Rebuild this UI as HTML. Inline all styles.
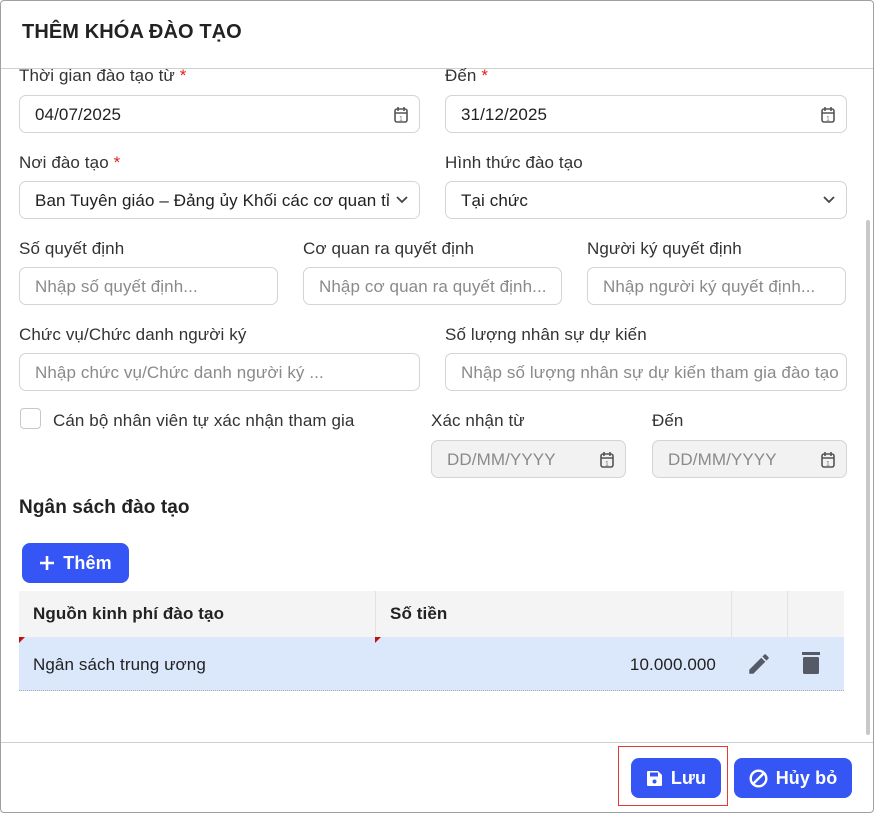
<!DOCTYPE html>
<html><head><meta charset="utf-8"><style>
*{box-sizing:border-box;margin:0;padding:0}
body{width:874px;height:813px;position:relative;background:#fff;font-family:"Liberation Sans",sans-serif;color:#212121;overflow:hidden;letter-spacing:0.1px}
.frame{position:absolute;left:0;top:0;width:874px;height:813px;border:1px solid #a0a0a0;border-radius:4px}
.a{position:absolute}
.lbl{position:absolute;font-size:17px;color:#333;line-height:20px}
.req{color:#e02020}
.in{position:absolute;height:38px;border:1px solid #d4d4d4;border-radius:7px;font-size:17px;line-height:38px;padding-left:15px;color:#212121;white-space:nowrap;overflow:hidden;background:#fff}
.ph{color:#8a8a8a}
.dis{background:#f2f2f2}
.ic{position:absolute;right:10px;top:10px}
.btn{position:absolute;background:#3555f5;color:#fff;border-radius:8px;font-size:18px;font-weight:bold;display:flex;align-items:center;justify-content:center;gap:8px}
</style></head><body>
<div class="frame"></div>
<div class="a" style="left:22px;top:21px;font-size:20px;font-weight:bold;color:#222">THÊM KHÓA ĐÀO TẠO</div>
<div class="a" style="left:1px;top:68px;width:872px;height:1px;background:#cfcfcf"></div>
<div class="a" style="left:866px;top:220px;width:4px;height:515px;background:#c8c8c8;border-radius:2px"></div>

<div class="lbl" style="left:19px;top:66px">Thời gian đào tạo từ <span class="req">*</span></div>
<div class="lbl" style="left:445px;top:66px">Đến <span class="req">*</span></div>
<div class="in" style="left:19px;top:95px;width:401px">04/07/2025<svg class="ic" width="16" height="18" viewBox="0 0 16 18"><rect x="2" y="3" width="12" height="13" rx="2" fill="none" stroke="#555" stroke-width="1.6"/><path d="M2 7h12M5 1v4M11 1v4" stroke="#555" stroke-width="1.6"/><text x="8" y="14.5" font-size="6" text-anchor="middle" fill="#555">1</text></svg></div>
<div class="in" style="left:445px;top:95px;width:402px">31/12/2025<svg class="ic" width="16" height="18" viewBox="0 0 16 18"><rect x="2" y="3" width="12" height="13" rx="2" fill="none" stroke="#555" stroke-width="1.6"/><path d="M2 7h12M5 1v4M11 1v4" stroke="#555" stroke-width="1.6"/><text x="8" y="14.5" font-size="6" text-anchor="middle" fill="#555">1</text></svg></div>

<div class="lbl" style="left:19px;top:153px">Nơi đào tạo <span class="req">*</span></div>
<div class="lbl" style="left:445px;top:153px">Hình thức đào tạo</div>
<div class="in" style="left:19px;top:181px;width:401px;padding-right:30px">Ban Tuyên giáo – Đảng ủy Khối các cơ quan tỉnh<span class="a" style="right:0;top:0;width:30px;height:36px;background:#fff"></span><svg class="ic" style="top:13px" width="14" height="10" viewBox="0 0 14 10"><path d="M2 2l5 5 5-5" fill="none" stroke="#444" stroke-width="1.8"/></svg></div>
<div class="in" style="left:445px;top:181px;width:402px">Tại chức<svg class="ic" style="top:13px" width="14" height="10" viewBox="0 0 14 10"><path d="M2 2l5 5 5-5" fill="none" stroke="#444" stroke-width="1.8"/></svg></div>

<div class="lbl" style="left:19px;top:239px">Số quyết định</div>
<div class="lbl" style="left:303px;top:239px">Cơ quan ra quyết định</div>
<div class="lbl" style="left:587px;top:239px">Người ký quyết định</div>
<div class="in ph" style="left:19px;top:267px;width:259px">Nhập số quyết định...</div>
<div class="in ph" style="left:303px;top:267px;width:259px">Nhập cơ quan ra quyết định...</div>
<div class="in ph" style="left:587px;top:267px;width:259px">Nhập người ký quyết định...</div>

<div class="lbl" style="left:19px;top:325px">Chức vụ/Chức danh người ký</div>
<div class="lbl" style="left:445px;top:325px">Số lượng nhân sự dự kiến</div>
<div class="in ph" style="left:19px;top:353px;width:401px">Nhập chức vụ/Chức danh người ký ...</div>
<div class="in ph" style="left:445px;top:353px;width:402px">Nhập số lượng nhân sự dự kiến tham gia đào tạo</div>

<div class="a" style="left:20px;top:408px;width:21px;height:21px;border:1px solid #c8c8c8;border-radius:4px"></div>
<div class="lbl" style="left:53px;top:411px">Cán bộ nhân viên tự xác nhận tham gia</div>
<div class="lbl" style="left:431px;top:411px">Xác nhận từ</div>
<div class="lbl" style="left:652px;top:411px">Đến</div>
<div class="in ph dis" style="left:431px;top:440px;width:195px">DD/MM/YYYY<svg class="ic" width="16" height="18" viewBox="0 0 16 18"><rect x="2" y="3" width="12" height="13" rx="2" fill="none" stroke="#555" stroke-width="1.6"/><path d="M2 7h12M5 1v4M11 1v4" stroke="#555" stroke-width="1.6"/><text x="8" y="14.5" font-size="6" text-anchor="middle" fill="#555">1</text></svg></div>
<div class="in ph dis" style="left:652px;top:440px;width:195px">DD/MM/YYYY<svg class="ic" width="16" height="18" viewBox="0 0 16 18"><rect x="2" y="3" width="12" height="13" rx="2" fill="none" stroke="#555" stroke-width="1.6"/><path d="M2 7h12M5 1v4M11 1v4" stroke="#555" stroke-width="1.6"/><text x="8" y="14.5" font-size="6" text-anchor="middle" fill="#555">1</text></svg></div>

<div class="a" style="left:19px;top:497px;font-size:19px;font-weight:bold;color:#222">Ngân sách đào tạo</div>
<div class="btn" style="left:22px;top:543px;width:107px;height:40px"><svg width="16" height="16" viewBox="0 0 16 16"><path d="M8 1v14M1 8h14" stroke="#fff" stroke-width="2.6"/></svg>Thêm</div>

<div class="a" style="left:19px;top:591px;width:825px;height:46px;background:#f4f4f4"></div>
<div class="a" style="left:375px;top:591px;width:1px;height:46px;background:#e2e2e2"></div>
<div class="a" style="left:731px;top:591px;width:1px;height:46px;background:#e2e2e2"></div>
<div class="a" style="left:787px;top:591px;width:1px;height:46px;background:#e2e2e2"></div>
<div class="a" style="left:33px;top:604px;font-size:17px;font-weight:bold;color:#222">Nguồn kinh phí đào tạo</div>
<div class="a" style="left:390px;top:604px;font-size:17px;font-weight:bold;color:#222">Số tiền</div>
<div class="a" style="left:19px;top:637px;width:825px;height:54px;background:#dbe8fb;border-bottom:1px dotted #aab"></div>
<div class="a" style="left:19px;top:637px;width:0;height:0;border-top:6px solid #c01010;border-right:6px solid transparent"></div>
<div class="a" style="left:375px;top:637px;width:0;height:0;border-top:6px solid #c01010;border-right:6px solid transparent"></div>
<div class="a" style="left:33px;top:655px;font-size:17px;color:#222">Ngân sách trung ương</div>
<div class="a" style="left:590px;top:655px;width:126px;text-align:right;font-size:17px;color:#222">10.000.000</div>
<svg class="a" style="left:746px;top:651px" width="26" height="26" viewBox="0 0 24 24"><path d="M3 17.25V21h3.75L17.8 9.94l-3.75-3.75L3 17.25zM20.7 7.04a1 1 0 000-1.41l-2.34-2.34a1 1 0 00-1.41 0l-1.83 1.83 3.75 3.75 1.83-1.83z" fill="#555a66"/></svg>
<svg class="a" style="left:800px;top:652px" width="22" height="24" viewBox="0 0 22 24"><rect x="2" y="0" width="18" height="3" fill="#555a66"/><rect x="3" y="5" width="16" height="17" rx="1.5" fill="#555a66"/></svg>

<div class="a" style="left:1px;top:742px;width:872px;height:1px;background:#cfcfcf"></div>
<div class="a" style="left:618px;top:746px;width:110px;height:60px;border:1.5px solid #e53935"></div>
<div class="btn" style="left:631px;top:758px;width:90px;height:40px"><svg width="17" height="17" viewBox="0 0 17 17"><path d="M1 2a1 1 0 011-1h10l4 4v10a1 1 0 01-1 1H2a1 1 0 01-1-1z" fill="#fff"/><rect x="4" y="2.5" width="8" height="4" fill="#3555f5"/><circle cx="8.5" cy="11.5" r="2" fill="#3555f5"/></svg>Lưu</div>
<div class="btn" style="left:734px;top:758px;width:118px;height:40px"><svg width="19" height="19" viewBox="0 0 19 19"><circle cx="9.5" cy="9.5" r="7.8" fill="none" stroke="#fff" stroke-width="2.4"/><path d="M4 15L15 4" stroke="#fff" stroke-width="2.4"/></svg>Hủy bỏ</div>
</body></html>
